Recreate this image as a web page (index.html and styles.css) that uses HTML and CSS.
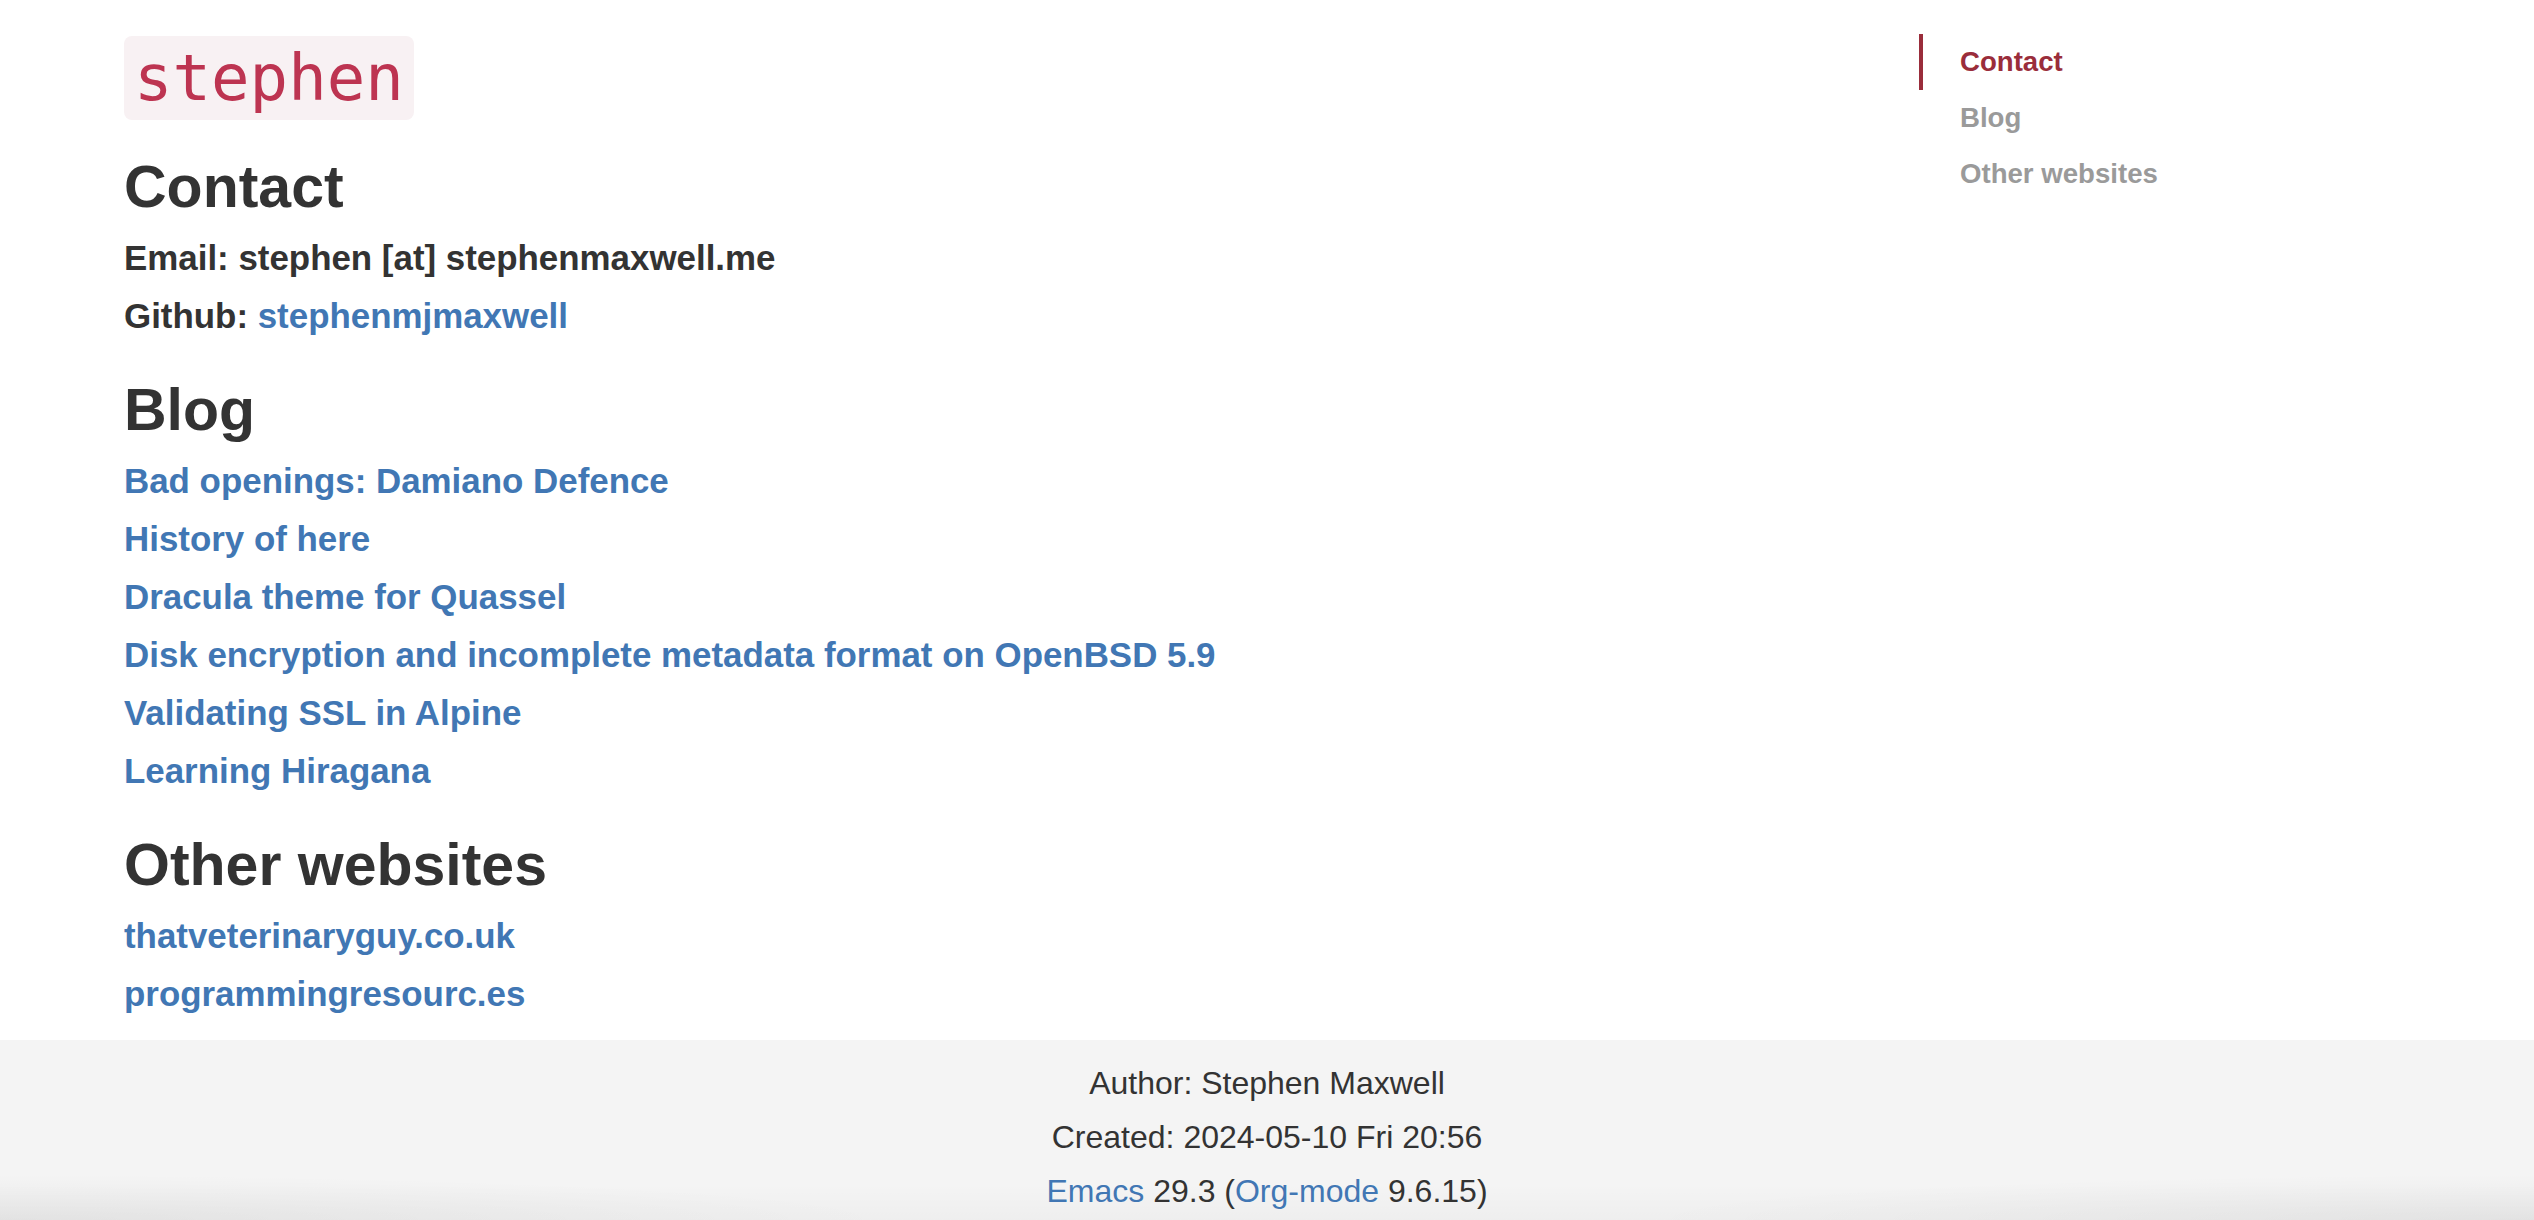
FILE: index.html
```html
<!DOCTYPE html>
<html lang="en">
<head>
<meta charset="utf-8">
<title>stephen</title>
<link rel="stylesheet" href="styles.css">
</head>
<body>
<div class="page">
  <main class="content">
    <header class="title-row"><code class="title">stephen</code></header>

    <section class="section" id="contact">
      <h2 class="section-title">Contact</h2>
      <p class="line">Email: stephen [at] stephenmaxwell.me</p>
      <p class="line">Github: <a class="link" href="#">stephenmjmaxwell</a></p>
    </section>

    <section class="section" id="blog">
      <h2 class="section-title">Blog</h2>
      <ul class="link-list">
        <li class="line"><a class="link" href="#">Bad openings: Damiano Defence</a></li>
        <li class="line"><a class="link" href="#">History of here</a></li>
        <li class="line"><a class="link" href="#">Dracula theme for Quassel</a></li>
        <li class="line"><a class="link" href="#">Disk encryption and incomplete metadata format on OpenBSD 5.9</a></li>
        <li class="line"><a class="link" href="#">Validating SSL in Alpine</a></li>
        <li class="line"><a class="link" href="#">Learning Hiragana</a></li>
      </ul>
    </section>

    <section class="section" id="other">
      <h2 class="section-title">Other websites</h2>
      <ul class="link-list">
        <li class="line"><a class="link" href="#">thatveterinaryguy.co.uk</a></li>
        <li class="line"><a class="link" href="#">programmingresourc.es</a></li>
      </ul>
    </section>
  </main>

  <nav class="toc">
    <a class="toc-item active" href="#contact">Contact</a>
    <a class="toc-item" href="#blog">Blog</a>
    <a class="toc-item" href="#other">Other websites</a>
  </nav>
</div>

<footer class="postamble">
  <p class="post-line">Author: Stephen Maxwell</p>
  <p class="post-line">Created: 2024-05-10 Fri 20:56</p>
  <p class="post-line"><a class="link plain" href="#">Emacs</a> 29.3 (<a class="link plain" href="#">Org-mode</a> 9.6.15)</p>
</footer>
</body>
</html>
```

FILE: styles.css
```css
html, body {
  margin: 0;
  padding: 0;
  background: #ffffff;
}

body {
  font-family: "Liberation Sans", Arial, Helvetica, sans-serif;
  color: #333333;
}

.page {
  display: flex;
  align-items: flex-start;
}

.content {
  box-sizing: border-box;
  width: 1919px;
  flex: 0 0 1919px;
  padding: 0 0 17px 124px;
}

.title-row {
  display: flex;
  margin: 36px 0 34px 0;
}

.title {
  display: block;
  font-family: "DejaVu Sans Mono", "Liberation Mono", monospace;
  font-size: 64px;
  line-height: 74px;
  padding: 5px 10px;
  color: #bd3451;
  background: #f8f1f3;
  border-radius: 8px;
}

.section {
  margin: 0;
}

.section-title {
  font-size: 59px;
  line-height: 66px;
  font-weight: 700;
  margin: 32px 0 9px 0;
  color: #333333;
}

.line {
  margin: 0;
  font-size: 34.9px;
  line-height: 58px;
  font-weight: 700;
}

.link-list {
  list-style: none;
  margin: 0;
  padding: 0;
}

.link {
  color: #4177b4;
  text-decoration: none;
}

.toc {
  flex: 1;
  display: flex;
  flex-direction: column;
  padding-top: 34px;
}

.toc-item {
  display: block;
  font-size: 27.6px;
  line-height: 56px;
  font-weight: 700;
  color: #9a9a9a;
  text-decoration: none;
  border-left: 4px solid transparent;
  padding-left: 37px;
}

.toc-item.active {
  color: #9a2d3b;
  border-left-color: #9a2d3b;
}

.postamble {
  padding: 16px 0 2px 0;
  text-align: center;
  font-size: 32px;
  background:
    radial-gradient(ellipse 900px 46px at 0% 100%, rgba(0,0,0,0.05), rgba(0,0,0,0) 100%),
    radial-gradient(ellipse 900px 46px at 100% 100%, rgba(0,0,0,0.05), rgba(0,0,0,0) 100%),
    linear-gradient(to bottom, rgba(0,0,0,0) 80%, rgba(0,0,0,0.025) 100%),
    #f4f4f4;
}

.post-line {
  margin: 0;
  line-height: 54px;
}

.link.plain {
  font-weight: 400;
}
```
